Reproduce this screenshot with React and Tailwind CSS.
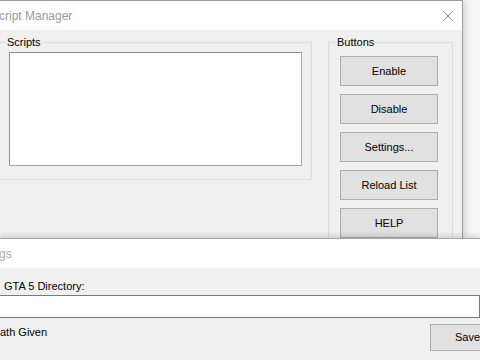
import React from "react";

const BUTTONS = ["Enable", "Disable", "Settings...", "Reload List", "HELP"];

function WinButton({ label, className = "" }) {
  return (
    <button className={`h-[30px] bg-[#e1e1e1] border border-[#adadad] text-[11px] text-black ${className}`}>
      {label}
    </button>
  );
}

function GroupBox({ title, className = "", labelClass = "", children }) {
  return (
    <div className={`relative border-[#dcdcdc] ${className}`}>
      <span className={`absolute top-[-8px] bg-[#f0f0f0] px-[1px] text-[11px] text-black leading-[14px] ${labelClass}`}>
        {title}
      </span>
      {children}
    </div>
  );
}

export default function App() {
  return (
    <div className="w-[480px] h-[360px] overflow-hidden bg-[#f7f7f7] flex flex-col font-['Liberation_Sans',Arial,sans-serif]">
      {/* script manager window */}
      <div className="h-[238px] shrink-0 flex">
        <div className="w-[463px] h-full flex flex-col border-t border-r border-[#9c9c9c] shadow-[3px_0_6px_rgba(0,0,0,0.13)] overflow-hidden">
          <div className="h-[29px] shrink-0 bg-white flex items-center justify-between pr-[8px]">
            <span className="text-[12px] text-[#999] -ml-[1px]">cript Manager</span>
            <svg width="12" height="12" viewBox="0 0 12 12">
              <path d="M1 1 L11 11 M11 1 L1 11" stroke="#8a8a8a" strokeWidth="1" fill="none" />
            </svg>
          </div>
          <div className="flex-1 bg-[#f0f0f0] flex items-start pt-[12px]">
            <GroupBox title="Scripts" className="w-[312px] h-[138px] border-t border-r border-b" labelClass="left-[6px]">
              <div className="ml-[9px] mt-[9px] w-[293px] h-[114px] bg-white border border-[#a5a8ad] border-t-[#8c8f94] border-l-[#8c8f94]" />
            </GroupBox>
            <GroupBox title="Buttons" className="ml-[16px] w-[125px] h-[220px] border" labelClass="left-[7px]">
              <div className="ml-[11px] mt-[13px] w-[98px] flex flex-col gap-[8px]">
                {BUTTONS.map((b) => (
                  <WinButton key={b} label={b} className="w-full" />
                ))}
              </div>
            </GroupBox>
          </div>
        </div>
      </div>

      {/* settings window */}
      <div className="relative flex-1 flex flex-col border-t border-[#a8a8a8] shadow-[0_-3px_5px_rgba(0,0,0,0.12)]">
        <div className="h-[29px] shrink-0 bg-white flex items-center">
          <span className="text-[12px] text-[#aaa] -ml-[1px]">gs</span>
        </div>
        <div className="flex-1 bg-[#f0f0f0] flex flex-col">
          <div className="mt-[11px] pl-[4px] text-[11px] text-black leading-[14px]">GTA 5 Directory:</div>
          <div className="mt-[2px] h-[23px] w-[480px] bg-white border-t border-b border-r border-[#7a7a7a]" />
          <div className="mt-[6px] flex items-start justify-between">
            <span className="mt-[1px] text-[11px] text-black leading-[14px]">ath Given</span>
            <button className="w-[75px] h-[27px] -mr-[25px] bg-[#e1e1e1] border border-[#adadad] text-[11px] text-black">
              Save
            </button>
          </div>
        </div>
      </div>
    </div>
  );
}
